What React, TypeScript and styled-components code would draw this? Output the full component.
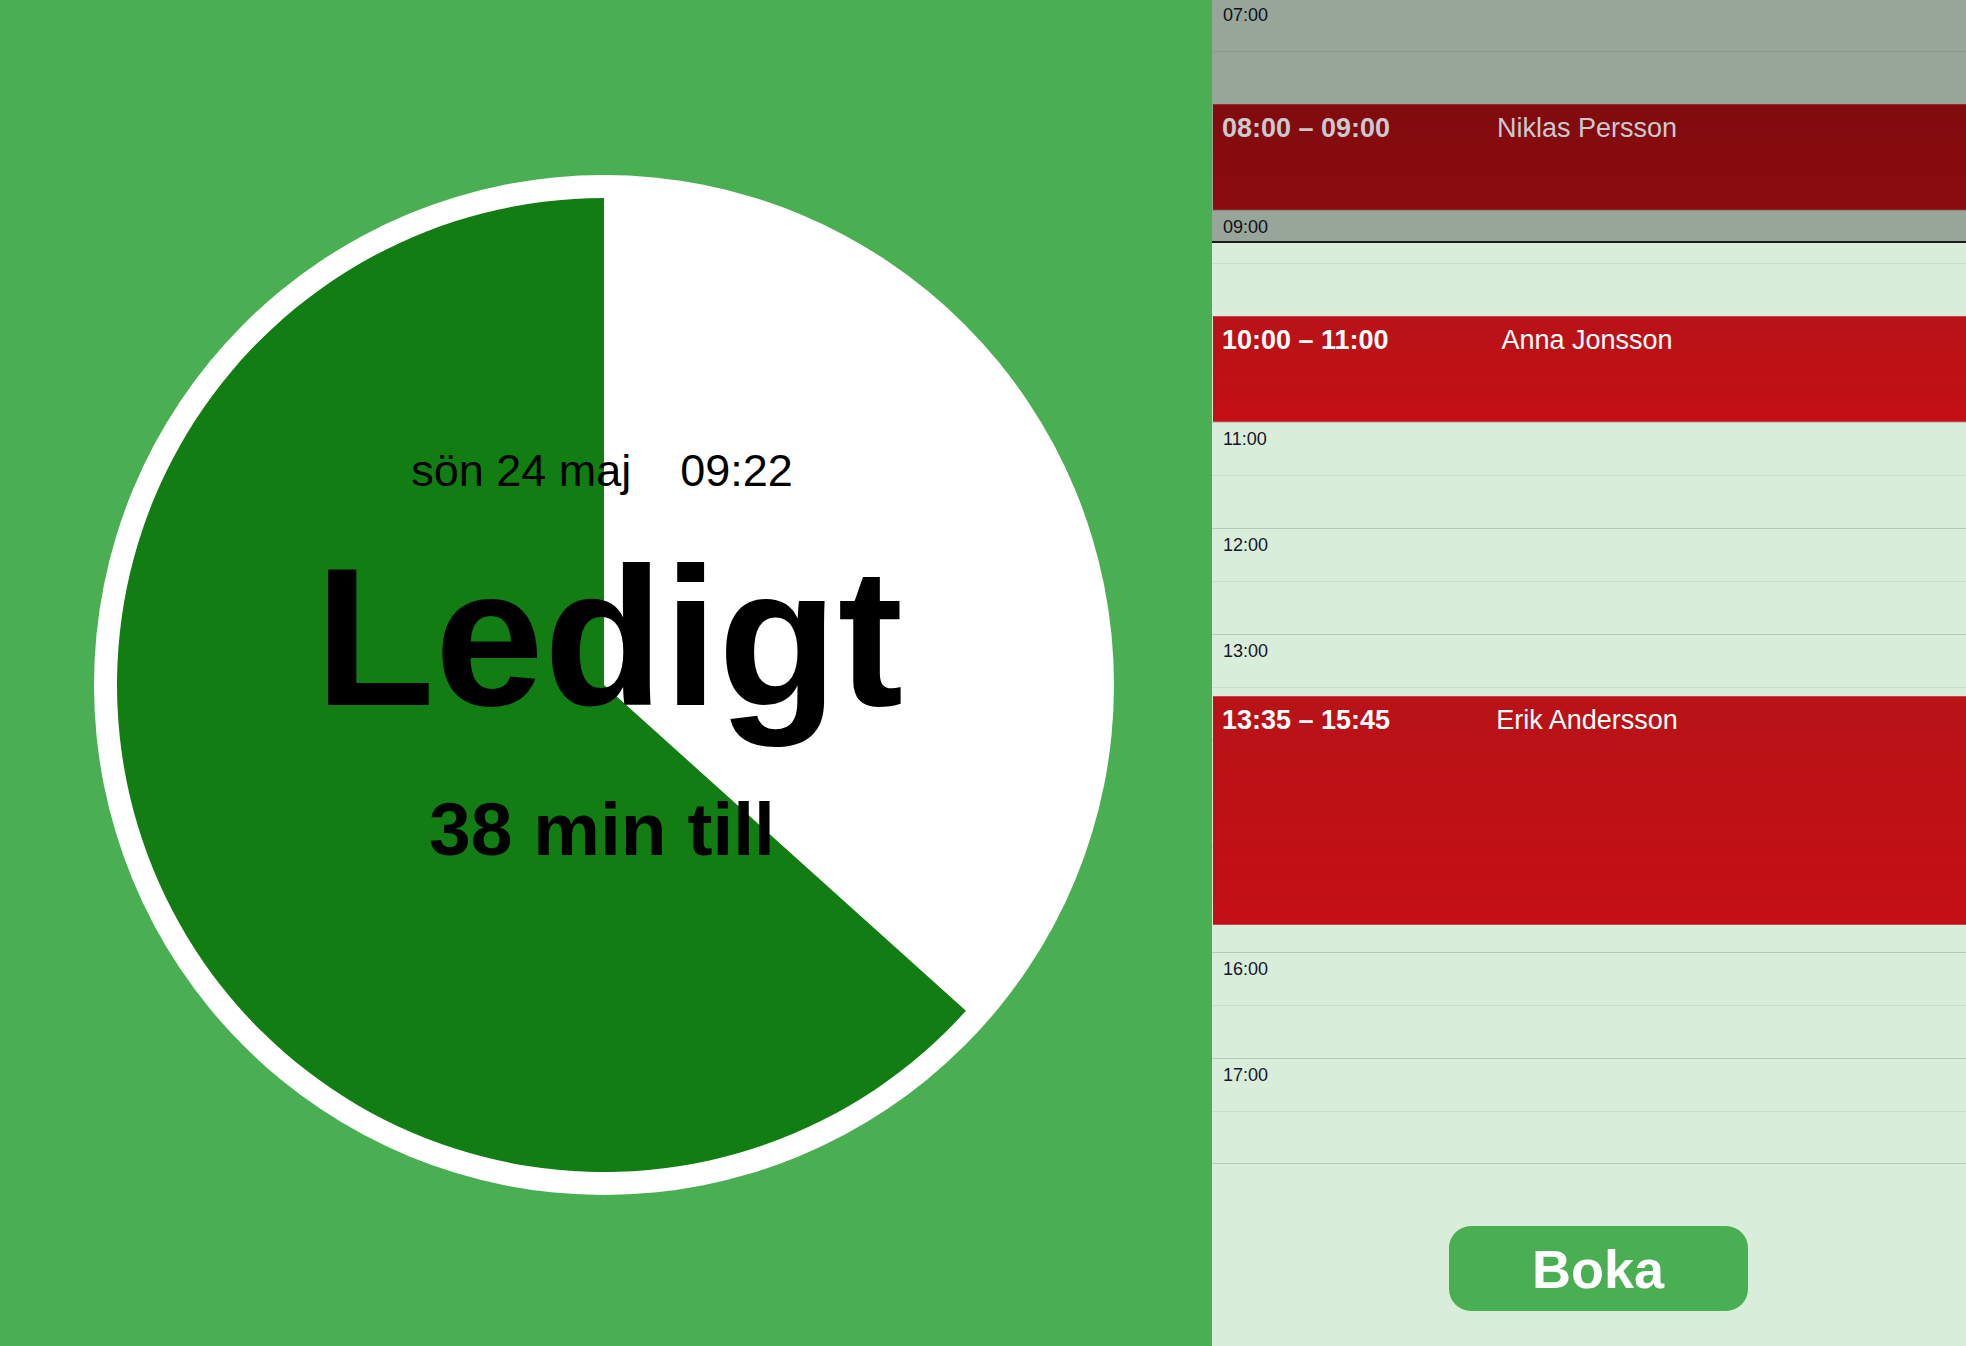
import React from "react";
import styled, { createGlobalStyle } from "styled-components";

const GlobalStyle = createGlobalStyle`
  html, body {
    margin: 0;
    padding: 0;
    overflow: hidden;
    background: #4aae52;
  }
  body {
    font-family: "Liberation Sans", Arial, Helvetica, sans-serif;
  }
`;

const HOUR_PX = 106;
const DAY_START = 7 * 60;
const HOURS = [7, 8, 9, 10, 11, 12, 13, 14, 15, 16, 17];
const NOW_OFFSET = 244;

type Booking = { start: number; end: number; label: string; name: string; past?: boolean };

const BOOKINGS: Booking[] = [
  { start: 8 * 60, end: 9 * 60, label: "08:00 – 09:00", name: "Niklas Persson", past: true },
  { start: 10 * 60, end: 11 * 60, label: "10:00 – 11:00", name: "Anna Jonsson" },
  { start: 13 * 60 + 35, end: 15 * 60 + 45, label: "13:35 – 15:45", name: "Erik Andersson" },
];

const Screen = styled.main`
  display: flex;
  width: 1966px;
  height: 1346px;
  overflow: hidden;
`;

const StatusPanel = styled.section`
  flex: none;
  width: 1212px;
  height: 100%;
  box-sizing: border-box;
  padding: 24px 4px 0 0;
  background: #4aae52;
  display: flex;
  align-items: center;
  justify-content: center;
`;

const Dial = styled.div`
  width: 1020px;
  height: 1020px;
  flex: none;
  border-radius: 50%;
  background: #ffffff;
  display: grid;
  & > * {
    grid-area: 1 / 1;
  }
`;

const PieChart = styled.svg`
  width: 1020px;
  height: 1020px;
  display: block;
`;

const Readout = styled.div`
  display: flex;
  flex-direction: column;
  align-items: center;
  padding-top: 274px;
  color: #000;
  z-index: 1;
`;

const DateLine = styled.div`
  display: flex;
  gap: 49px;
  font-size: 45px;
  line-height: 44px;
  padding-right: 4px;
`;

const StatusWord = styled.div`
  margin-top: 47px;
  font-size: 196px;
  line-height: 195px;
  font-weight: 700;
  padding-left: 10px;
`;

const Countdown = styled.div`
  margin-top: 57px;
  font-size: 75px;
  line-height: 74px;
  font-weight: 700;
  padding-right: 4px;
`;

const SchedulePanel = styled.section`
  flex: 1;
  height: 100%;
  background: #d9eeda;
  display: flex;
  flex-direction: column;
  overflow: hidden;
`;

const Timeline = styled.div`
  position: relative;
  margin-top: -2px;
  flex: none;
`;

const HourRow = styled.div<{ $last?: boolean }>`
  height: ${HOUR_PX}px;
  box-sizing: border-box;
  border-top: 1px solid #bcc8bd;
  border-bottom: ${(p) => (p.$last ? "1px solid #bcc8bd" : "none")};
  background: linear-gradient(
    to bottom,
    transparent 52px,
    #c9ddca 52px,
    #c9ddca 53px,
    transparent 53px
  );
  padding: 6px 0 0 11px;
  font-size: 18px;
  color: #16162a;
`;

const PastShade = styled.div`
  position: absolute;
  left: 0;
  right: 0;
  top: 0;
  height: ${NOW_OFFSET}px;
  background: rgba(0, 0, 0, 0.3);
  z-index: 1;
`;

const NowLine = styled.div`
  position: absolute;
  left: 0;
  right: 0;
  top: ${NOW_OFFSET - 1}px;
  height: 2px;
  background: #1c1c1c;
  z-index: 1;
`;

const BookingBlock = styled.div<{ $past?: boolean }>`
  position: absolute;
  left: 1px;
  right: 0;
  z-index: 2;
  box-sizing: border-box;
  display: grid;
  grid-template-columns: 1fr auto 1fr;
  align-items: start;
  padding: 8px 10px 0 9px;
  font-size: 27px;
  border-top: 1px solid ${(p) => (p.$past ? "rgba(255,255,255,0.12)" : "rgba(255,255,255,0.22)")};
  border-bottom: 1px solid ${(p) => (p.$past ? "rgba(255,255,255,0.12)" : "rgba(255,255,255,0.22)")};
  background: ${(p) =>
    p.$past
      ? "linear-gradient(to bottom, #810b0e, #8b0b0f)"
      : "linear-gradient(to bottom, #b81317, #c40f15)"};
  color: ${(p) => (p.$past ? "#c9c9cf" : "#ffffff")};
`;

const BookingTime = styled.span`
  font-weight: 700;
  justify-self: start;
  white-space: nowrap;
`;

const BookingName = styled.span`
  grid-column: 2;
  white-space: nowrap;
  padding-right: 4px;
`;

const Footer = styled.div`
  flex: 1;
  display: flex;
  justify-content: center;
  align-items: flex-start;
  padding: 62px 0 0 18px;
`;

const BookButton = styled.button`
  width: 299px;
  height: 85px;
  border: none;
  border-radius: 22px;
  background: #4aae52;
  color: #ffffff;
  font-family: "Liberation Sans", Arial, sans-serif;
  font-size: 54px;
  font-weight: 700;
  line-height: 1;
  padding: 0;
  cursor: pointer;
`;

const toY = (min: number) => ((min - DAY_START) / 60) * HOUR_PX;

function Pie({ minutes }: { minutes: number }) {
  const r = 487;
  const a = (minutes / 60) * 2 * Math.PI;
  const x = r * Math.sin(a);
  const y = -r * Math.cos(a);
  const large = 2 * Math.PI - a > Math.PI ? 1 : 0;
  return (
    <PieChart viewBox="-510 -510 1020 1020">
      <path d={`M0 0 L${x.toFixed(2)} ${y.toFixed(2)} A${r} ${r} 0 ${large} 1 0 ${-r} Z`} fill="#117d13" />
    </PieChart>
  );
}

const pad = (n: number) => String(n).padStart(2, "0");

export default function App() {
  return (
    <>
      <GlobalStyle />
      <Screen>
        <StatusPanel>
          <Dial>
            <Pie minutes={22} />
            <Readout>
              <DateLine>
                <span>sön 24 maj</span>
                <span>09:22</span>
              </DateLine>
              <StatusWord>Ledigt</StatusWord>
              <Countdown>38 min till</Countdown>
            </Readout>
          </Dial>
        </StatusPanel>
        <SchedulePanel>
          <Timeline>
            {HOURS.map((h, i) => (
              <HourRow key={h} $last={i === HOURS.length - 1}>
                {pad(h)}:00
              </HourRow>
            ))}
            <PastShade />
            <NowLine />
            {BOOKINGS.map((b) => (
              <BookingBlock
                key={b.label}
                $past={b.past}
                style={{ top: toY(b.start), height: toY(b.end) - toY(b.start) }}
              >
                <BookingTime>{b.label}</BookingTime>
                <BookingName>{b.name}</BookingName>
              </BookingBlock>
            ))}
          </Timeline>
          <Footer>
            <BookButton>Boka</BookButton>
          </Footer>
        </SchedulePanel>
      </Screen>
    </>
  );
}
